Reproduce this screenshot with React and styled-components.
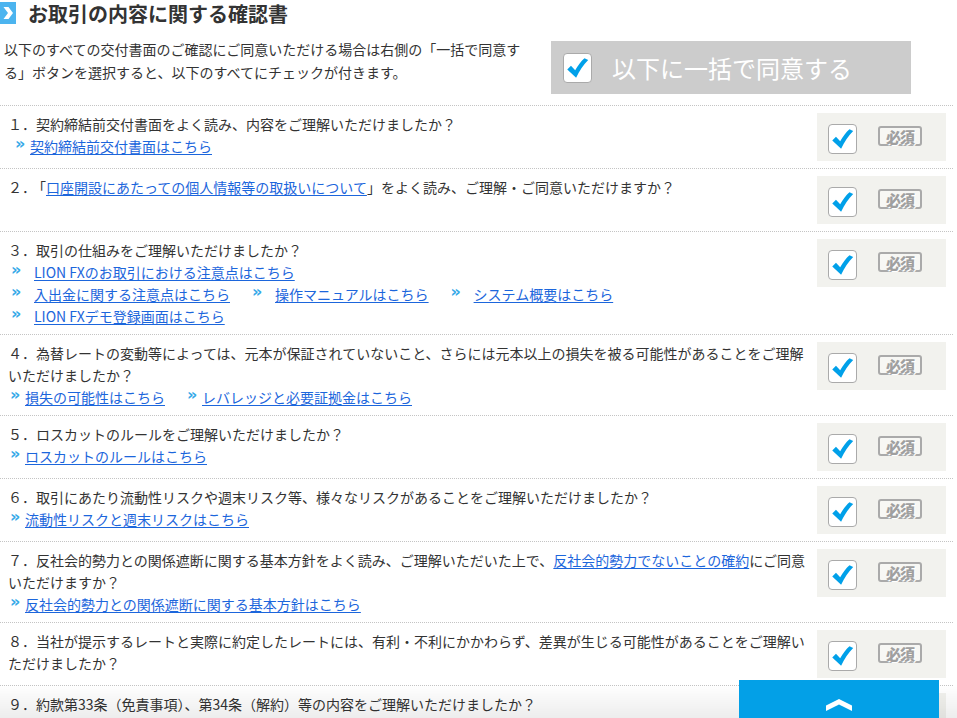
import React from 'react';
import styled, { createGlobalStyle } from 'styled-components';

const GlobalStyle = createGlobalStyle`
    body{
        margin: 0;
        background: #fff;
        color: #333;
        font-family: "Noto Sans CJK JP", "Noto Sans", sans-serif;
    }
`;

const Page = styled.div`
    width: 953px;
    padding-bottom: 40px;
`;

const Header = styled.h1`
    display: flex;
    align-items: center;
    gap: 12px;
    height: 26px;
    margin: 0;
    font-size: 20px;
    font-weight: bold;
    color: #333;
    letter-spacing: 0;
`;

const Intro = styled.div`
    display: flex;
    justify-content: space-between;
    align-items: flex-start;
    margin-top: 12px;
    padding: 0 42px 11px 4px;
`;

const IntroText = styled.p`
    margin: 0;
    font-size: 14px;
    line-height: 23px;
    color: #333;
`;

const AllButton = styled.button`
    display: flex;
    align-items: center;
    gap: 20px;
    width: 360px;
    height: 53px;
    margin-top: 3px;
    padding: 0 0 0 12px;
    border: none;
    background: #cccccc;
    color: #fff;
    font-family: inherit;
    font-size: 24px;
    cursor: pointer;
`;

const List = styled.div`
    border-top: 1px dotted #c4c4c4;
`;

const Row = styled.div`
    display: flex;
    align-items: flex-start;
    gap: 8px;
    padding: 7px 7px 7px 8px;
    border-bottom: 1px dotted #c4c4c4;
`;

const Question = styled.div`
    flex: 0 0 801px;
    font-size: 14px;
    line-height: 22px;
    color: #333;
`;

const Link = styled.a`
    color: #1c66dc;
    text-decoration: underline;
    text-underline-offset: 2px;
`;

const Bracket = styled.span`
    margin-left: 3px;
`;

const LinkLine = styled.div`
    display: flex;
    gap: 22px;
    padding-left: ${({ $indent }) => $indent}px;
`;

const LinkItem = styled.span`
    display: inline-flex;
    align-items: flex-start;
    gap: ${({ $gap }) => $gap}px;
`;

const Mark = styled.span`
    display: inline-block;
    width: 6px;
    font-family: "DejaVu Sans", sans-serif;
    font-size: 16px;
    font-weight: bold;
    line-height: 17px;
    color: #35a9e8;
`;

const CheckArea = styled.div`
    display: flex;
    align-items: flex-start;
    gap: 21px;
    flex: 0 0 129px;
    height: 48px;
    box-sizing: border-box;
    padding: 11px 0 0 11px;
    background: #f2f2ee;
`;

const Box = styled.span`
    display: inline-flex;
    align-items: center;
    justify-content: center;
    width: 29px;
    height: 30px;
    box-sizing: border-box;
    border: 1px solid #aaa;
    border-radius: 4px;
    background: #fff;
`;

const Badge = styled.span`
    display: inline-flex;
    align-items: center;
    justify-content: center;
    width: 44px;
    height: 20px;
    margin-top: 2px;
    box-sizing: border-box;
    border: 2px solid #aaa;
    border-radius: 3px;
    background: #f7f7f4;
    color: #a0a0a0;
    font-size: 15px;
    font-weight: 900;
    letter-spacing: -1px;
    text-shadow: 1px 1px 0 #fff;
`;

const Fade = styled.div`
    position: fixed;
    left: 0;
    right: 0;
    bottom: 0;
    height: 34px;
    background: linear-gradient(rgba(0, 0, 0, 0), rgba(0, 0, 0, 0.07));
    pointer-events: none;
`;

const TopButton = styled.button`
    position: fixed;
    left: 739px;
    bottom: 0;
    width: 200px;
    height: 38px;
    border: none;
    background: #03a0e7;
    display: flex;
    justify-content: center;
    padding-top: 19px;
    box-sizing: border-box;
    cursor: pointer;
`;

const Check = () => (
    <Box>
        <svg width="27" height="28" viewBox="0 0 29 30">
            <path d="M3.5 16.5 L7.5 12.5 L12 17.5 C15 12 18.5 7.5 22 4.5 L26 6.5 C21 11.5 16.5 18 13 25.5 Z" fill="#00a0e9" />
        </svg>
    </Box>
);

const Required = () => (
    <CheckArea>
        <Check />
        <Badge>必須</Badge>
    </CheckArea>
);

const Item = ({ children, gap = 9 }) => (
    <LinkItem $gap={gap}>
        <Mark>»</Mark>
        <Link href="#">{children}</Link>
    </LinkItem>
);

const App = () => {
    return (
        <Page>
            <GlobalStyle />
            <Header>
                <svg width="16" height="22" viewBox="0 0 16 22">
                    <rect width="16" height="22" fill="#4cb4ef" />
                    <path d="M3.5 5 L8.5 5 L13 11 L8.5 17 L3.5 17 L8 11 Z" fill="#fff" />
                </svg>
                お取引の内容に関する確認書
            </Header>
            <Intro>
                <IntroText>
                    以下のすべての交付書面のご確認にご同意いただける場合は右側の「一括で同意す<br />
                    る」ボタンを選択すると、以下のすべてにチェックが付きます。
                </IntroText>
                <AllButton>
                    <Check />
                    以下に一括で同意する
                </AllButton>
            </Intro>
            <List>
                <Row>
                    <Question>
                        １．契約締結前交付書面をよく読み、内容をご理解いただけましたか？
                        <LinkLine $indent={7}>
                            <Item>契約締結前交付書面はこちら</Item>
                        </LinkLine>
                    </Question>
                    <Required />
                </Row>
                <Row>
                    <Question>
                        ２．<Bracket>「</Bracket><Link href="#">口座開設にあたっての個人情報等の取扱いについて</Link>」をよく読み、ご理解・ご同意いただけますか？
                    </Question>
                    <Required />
                </Row>
                <Row>
                    <Question>
                        ３．取引の仕組みをご理解いただけましたか？
                        <LinkLine $indent={3}>
                            <Item gap={17}>LION FXのお取引における注意点はこちら</Item>
                        </LinkLine>
                        <LinkLine $indent={3}>
                            <Item gap={17}>入出金に関する注意点はこちら</Item>
                            <Item gap={17}>操作マニュアルはこちら</Item>
                            <Item gap={17}>システム概要はこちら</Item>
                        </LinkLine>
                        <LinkLine $indent={3}>
                            <Item gap={17}>LION FXデモ登録画面はこちら</Item>
                        </LinkLine>
                    </Question>
                    <Required />
                </Row>
                <Row>
                    <Question>
                        ４．為替レートの変動等によっては、元本が保証されていないこと、さらには元本以上の損失を被る可能性があることをご理解いただけましたか？
                        <LinkLine $indent={2}>
                            <Item>損失の可能性はこちら</Item>
                            <Item>レバレッジと必要証拠金はこちら</Item>
                        </LinkLine>
                    </Question>
                    <Required />
                </Row>
                <Row>
                    <Question>
                        ５．ロスカットのルールをご理解いただけましたか？
                        <LinkLine $indent={2}>
                            <Item>ロスカットのルールはこちら</Item>
                        </LinkLine>
                    </Question>
                    <Required />
                </Row>
                <Row>
                    <Question>
                        ６．取引にあたり流動性リスクや週末リスク等、様々なリスクがあることをご理解いただけましたか？
                        <LinkLine $indent={2}>
                            <Item>流動性リスクと週末リスクはこちら</Item>
                        </LinkLine>
                    </Question>
                    <Required />
                </Row>
                <Row>
                    <Question>
                        ７．反社会的勢力との関係遮断に関する基本方針をよく読み、ご理解いただいた上で、<Link href="#">反社会的勢力でないことの確約</Link>にご同意いただけますか？
                        <LinkLine $indent={2}>
                            <Item>反社会的勢力との関係遮断に関する基本方針はこちら</Item>
                        </LinkLine>
                    </Question>
                    <Required />
                </Row>
                <Row>
                    <Question>
                        ８．当社が提示するレートと実際に約定したレートには、有利・不利にかかわらず、差異が生じる可能性があることをご理解いただけましたか？
                    </Question>
                    <Required />
                </Row>
                <Row>
                    <Question>
                        ９．約款第33条（免責事項）、第34条（解約）等の内容をご理解いただけましたか？
                        <LinkLine $indent={2}>
                            <Item>約款はこちら</Item>
                        </LinkLine>
                    </Question>
                    <Required />
                </Row>
            </List>
            <Fade />
            <TopButton aria-label="ページトップへ">
                <svg width="26" height="12" viewBox="0 0 26 12">
                    <path d="M0 6.5 L13 0 L26 6.5 L26 12 L13 5.5 L0 12 Z" fill="#fff" />
                </svg>
            </TopButton>
        </Page>
    );
}

export default App;
